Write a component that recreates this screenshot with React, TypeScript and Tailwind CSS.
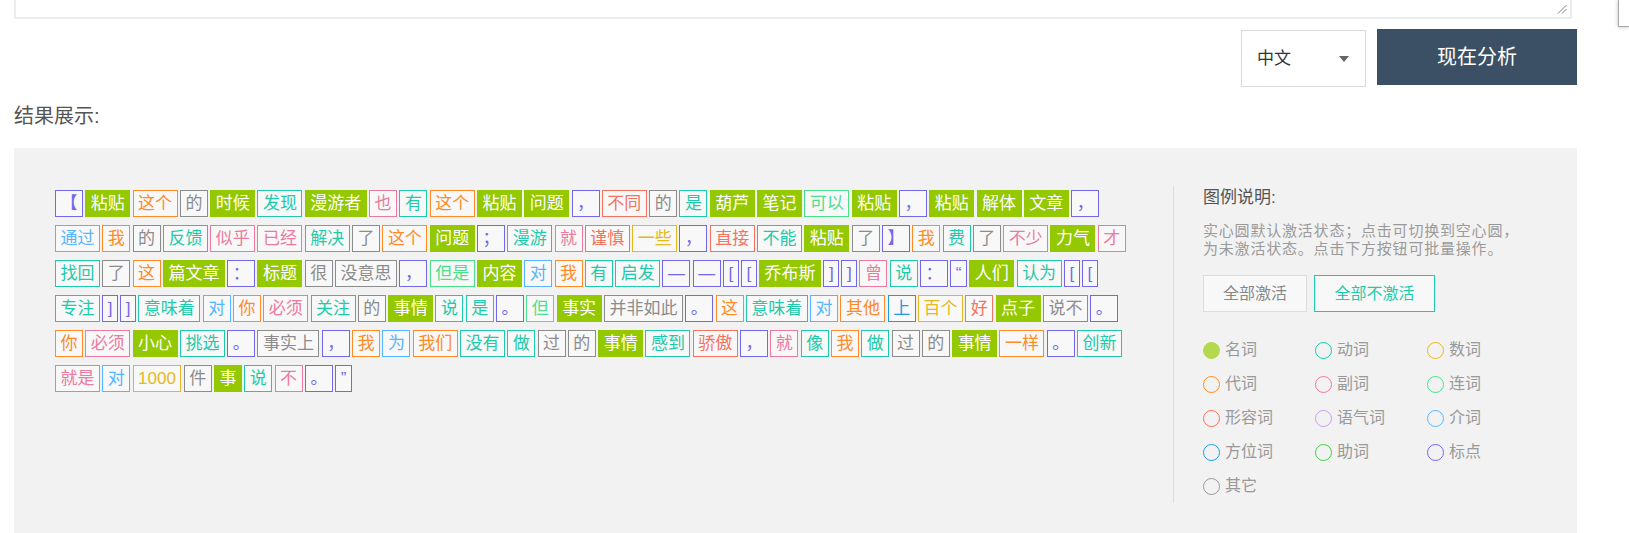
import React from "react";

type T = "n" | "v" | "m" | "r" | "d" | "c" | "a" | "y" | "p" | "f" | "u" | "w" | "x";

const cls: Record<T, string> = {
  n: "bg-[#94c800] border-[#94c800] text-white",
  v: "bg-[#f8f8f8] border-[#1ecaa9] text-[#1ecaa9]",
  m: "bg-[#f8f8f8] border-[#e6b820] text-[#e6b820]",
  r: "bg-[#f8f8f8] border-[#ff8a26] text-[#ff8a26]",
  d: "bg-[#f8f8f8] border-[#ec7aa0] text-[#ec7aa0]",
  c: "bg-[#f8f8f8] border-[#4ae08c] text-[#4ae08c]",
  a: "bg-[#f8f8f8] border-[#f5725f] text-[#f5725f]",
  y: "bg-[#f8f8f8] border-[#c9a0ea] text-[#c9a0ea]",
  p: "bg-[#f8f8f8] border-[#55b5ff] text-[#55b5ff]",
  f: "bg-[#f8f8f8] border-[#1d9be0] text-[#1d9be0]",
  u: "bg-[#f8f8f8] border-[#44cc44] text-[#44cc44]",
  w: "bg-[#f8f8f8] border-[#7468ea] text-[#7468ea]",
  x: "bg-[#f8f8f8] border-[#8c8c8c] text-[#8c8c8c]",
};

const rows: [string, T][][] = [
  [["【","w"],["粘贴","n"],["这个","r"],["的","x"],["时候","n"],["发现","v"],["漫游者","n"],["也","d"],["有","v"],["这个","r"],["粘贴","n"],["问题","n"],["，","w"],["不同","a"],["的","x"],["是","v"],["葫芦","n"],["笔记","n"],["可以","c"],["粘贴","n"],["，","w"],["粘贴","n"],["解体","n"],["文章","n"],["，","w"]],
  [["通过","p"],["我","r"],["的","x"],["反馈","v"],["似乎","d"],["已经","d"],["解决","v"],["了","x"],["这个","r"],["问题","n"],["；","w"],["漫游","v"],["就","d"],["谨慎","a"],["一些","m"],["，","w"],["直接","a"],["不能","v"],["粘贴","n"],["了","x"],["】","w"],["我","r"],["费","v"],["了","x"],["不少","d"],["力气","n"],["才","d"]],
  [["找回","v"],["了","x"],["这","r"],["篇文章","n"],["：","w"],["标题","n"],["很","x"],["没意思","x"],["，","w"],["但是","c"],["内容","n"],["对","p"],["我","r"],["有","v"],["启发","v"],["—","w"],["—","w"],["[","w"],["[","w"],["乔布斯","n"],["]","w"],["]","w"],["曾","d"],["说","v"],["：","w"],["“","w"],["人们","n"],["认为","v"],["[","w"],["[","w"]],
  [["专注","v"],["]","w"],["]","w"],["意味着","v"],["对","p"],["你","r"],["必须","d"],["关注","v"],["的","x"],["事情","n"],["说","v"],["是","v"],["。","w"],["但","c"],["事实","n"],["并非如此","x"],["。","w"],["这","r"],["意味着","v"],["对","p"],["其他","r"],["上","f"],["百个","m"],["好","a"],["点子","n"],["说不","x"],["。","w"]],
  [["你","r"],["必须","d"],["小心","n"],["挑选","v"],["。","w"],["事实上","x"],["，","w"],["我","r"],["为","p"],["我们","r"],["没有","v"],["做","v"],["过","x"],["的","x"],["事情","n"],["感到","v"],["骄傲","a"],["，","w"],["就","d"],["像","v"],["我","r"],["做","v"],["过","x"],["的","x"],["事情","n"],["一样","r"],["。","w"],["创新","v"]],
  [["就是","d"],["对","p"],["1000","m"],["件","x"],["事","n"],["说","v"],["不","d"],["。","w"],["”","w"]],
];

const legend: { label: string; color: string; filled?: boolean }[] = [
  { label: "名词", color: "border-[#b4d94e] bg-[#b4d94e]", filled: true },
  { label: "动词", color: "border-[#1ecaa9]" },
  { label: "数词", color: "border-[#e6ba2a]" },
  { label: "代词", color: "border-[#ff8c26]" },
  { label: "副词", color: "border-[#ec7aa0]" },
  { label: "连词", color: "border-[#4ae08c]" },
  { label: "形容词", color: "border-[#f5725f]" },
  { label: "语气词", color: "border-[#c9a0ea]" },
  { label: "介词", color: "border-[#5ab6ff]" },
  { label: "方位词", color: "border-[#1d9be0]" },
  { label: "助词", color: "border-[#44cc44]" },
  { label: "标点", color: "border-[#7468ea]" },
  { label: "其它", color: "border-[#999999]" },
];

export default function App() {
  return (
    <div className="relative w-full h-[533px] overflow-hidden bg-white font-['Liberation_Sans','Noto_Sans_CJK_SC',sans-serif]">
      {/* floating widget at right edge */}
      <div className="absolute top-0 right-0 w-[11px] h-[27px] bg-white border-l border-b border-[#a8a8a8] shadow-[0_0_4px_rgba(0,0,0,0.25)]" />

      {/* textarea bottom */}
      <div className="relative ml-[14px] w-[1558px] h-[19px] border-x-2 border-b-2 border-[#ececec] bg-white">
        <svg className="absolute right-[3px] bottom-[3px]" width="10" height="10" viewBox="0 0 10 10">
          <line x1="9.5" y1="1" x2="1" y2="9.5" stroke="#7a7a7a" strokeWidth="1" />
          <line x1="9.5" y1="5" x2="5" y2="9.5" stroke="#7a7a7a" strokeWidth="1" />
        </svg>
      </div>

      {/* select + button */}
      <div className="flex justify-end items-start gap-[11px] mt-[10px] mr-[52px]">
        <div className="mt-[1px] w-[125px] h-[57px] border border-[#d9d9d9] bg-white flex items-center justify-between pl-[15px] pr-[16px]">
          <span className="text-[17px] text-[#333]">中文</span>
          <svg width="10" height="6" viewBox="0 0 10 6">
            <path d="M0 0 L10 0 L5 6 Z" fill="#666" />
          </svg>
        </div>
        <div className="w-[200px] h-[56px] bg-[#3c5065] text-white text-[20px] flex items-center justify-center">
          现在分析
        </div>
      </div>

      {/* title */}
      <div className="mt-[15px] ml-[14px] text-[20px] leading-[28px] text-[#555]">结果展示:</div>

      {/* panel */}
      <div className="mt-[18px] ml-[14px] w-[1563px] h-[385px] bg-[#f2f2f2] flex">
        <div className="pl-[41px] pt-[42px] w-[1126px] flex flex-col gap-y-[8px]">
          {rows.map((row, i) => (
            <div key={i} className="flex gap-x-[2.3px]">
              {row.map(([t, k], j) => (
                <span
                  key={j}
                  className={`h-[27px] border px-[4.5px] text-[17px] leading-[25px] whitespace-nowrap ${cls[k]}`}
                >
                  {t}
                </span>
              ))}
            </div>
          ))}
        </div>

        <div className="ml-[33px] mt-[38px] h-[317px] border-l border-[#dcdcdc] pl-[29px] w-[404px]">
          <div className="text-[17px] leading-[24px] text-[#555]">图例说明:</div>
          <div className="mt-[12px] text-[15px] tracking-[0.8px] leading-[18px] text-[#9a9a9a]">
            <div>实心圆默认激活状态；点击可切换到空心圆，</div>
            <div>为未激活状态。点击下方按钮可批量操作。</div>
          </div>
          <div className="mt-[17px] flex gap-[7px]">
            <div className="w-[104px] h-[37px] border border-[#dddddd] bg-[#f8f8f8] text-[16px] text-[#888] flex items-center justify-center">
              全部激活
            </div>
            <div className="w-[121px] h-[37px] border-[1.5px] border-[#1ecaa9] bg-[#f8f8f8] text-[16px] text-[#1ecaa9] flex items-center justify-center">
              全部不激活
            </div>
          </div>
          <div className="mt-[21px] grid grid-cols-[112px_112px_112px]">
            {legend.map((l) => (
              <div key={l.label} className="h-[34px] flex items-center gap-[5px]">
                <span className={`w-[17px] h-[17px] rounded-full border-[1.5px] ${l.color}`} />
                <span className="text-[16px] text-[#999]">{l.label}</span>
              </div>
            ))}
          </div>
        </div>
      </div>
    </div>
  );
}
